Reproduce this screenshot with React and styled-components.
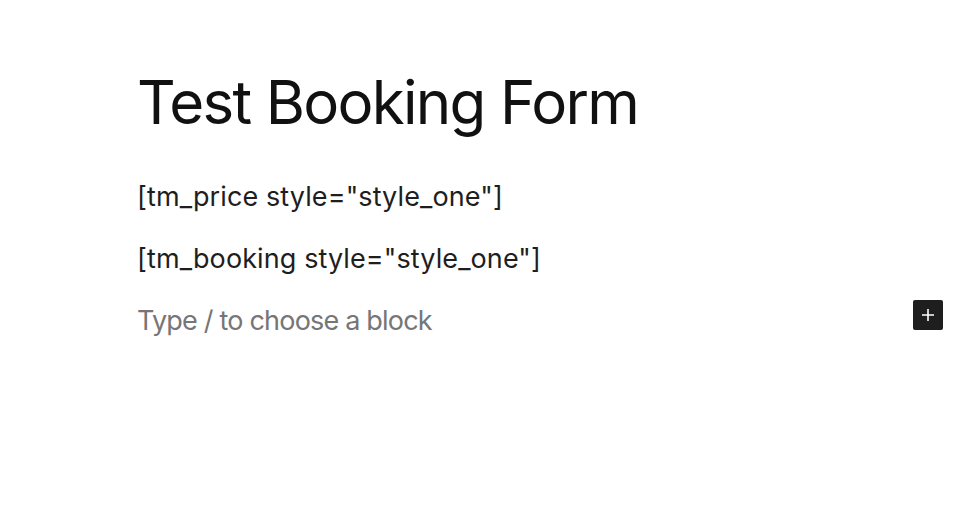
import React from "react";
import styled, { createGlobalStyle } from "styled-components";

const Global = createGlobalStyle`
  html, body { margin: 0; padding: 0; background: #fff; }
  body { font-family: Inter, "Noto Sans", sans-serif; color: #1e1e1e; }
`;

const Canvas = styled.div`
  width: 976px;
  height: 515px;
  box-sizing: border-box;
  padding: 63px 33px 0 137px;
  display: flex;
  flex-direction: column;
`;

const Title = styled.h1`
  margin: 0 0 38px;
  font-family: Inter, sans-serif;
  font-weight: 400;
  font-size: 60px;
  line-height: 78px;
  letter-spacing: -1.7px;
  color: #111;
`;

const Shortcode = styled.p`
  margin: 0 0 26px;
  font-family: Inter, sans-serif;
  font-size: 27px;
  line-height: 36px;
  letter-spacing: 0.1px;
  color: #1e1e1e;
`;

const AppenderRow = styled.div`
  display: flex;
  align-items: flex-start;
  justify-content: space-between;
`;

const Placeholder = styled.p`
  margin: 0;
  font-family: Inter, sans-serif;
  font-size: 27px;
  line-height: 36px;
  letter-spacing: -0.8px;
  color: #767676;
`;

const AddButton = styled.button`
  width: 30px;
  height: 30px;
  margin-top: -3px;
  padding: 0;
  border: none;
  border-radius: 2px;
  background: #1e1e1e;
  display: flex;
  align-items: center;
  justify-content: center;
  cursor: pointer;
`;

export default function App() {
  return (
    <>
      <Global />
      <Canvas>
        <Title>Test Booking Form</Title>
        <Shortcode>[tm_price style="style_one"]</Shortcode>
        <Shortcode>[tm_booking style="style_one"]</Shortcode>
        <AppenderRow>
          <Placeholder>Type / to choose a block</Placeholder>
          <AddButton aria-label="Add block">
            <svg width="24" height="24" viewBox="0 0 24 24">
              <path d="M18 11.2h-5.2V6h-1.6v5.2H6v1.6h5.2V18h1.6v-5.2H18z" fill="#fff" />
            </svg>
          </AddButton>
        </AppenderRow>
      </Canvas>
    </>
  );
}
